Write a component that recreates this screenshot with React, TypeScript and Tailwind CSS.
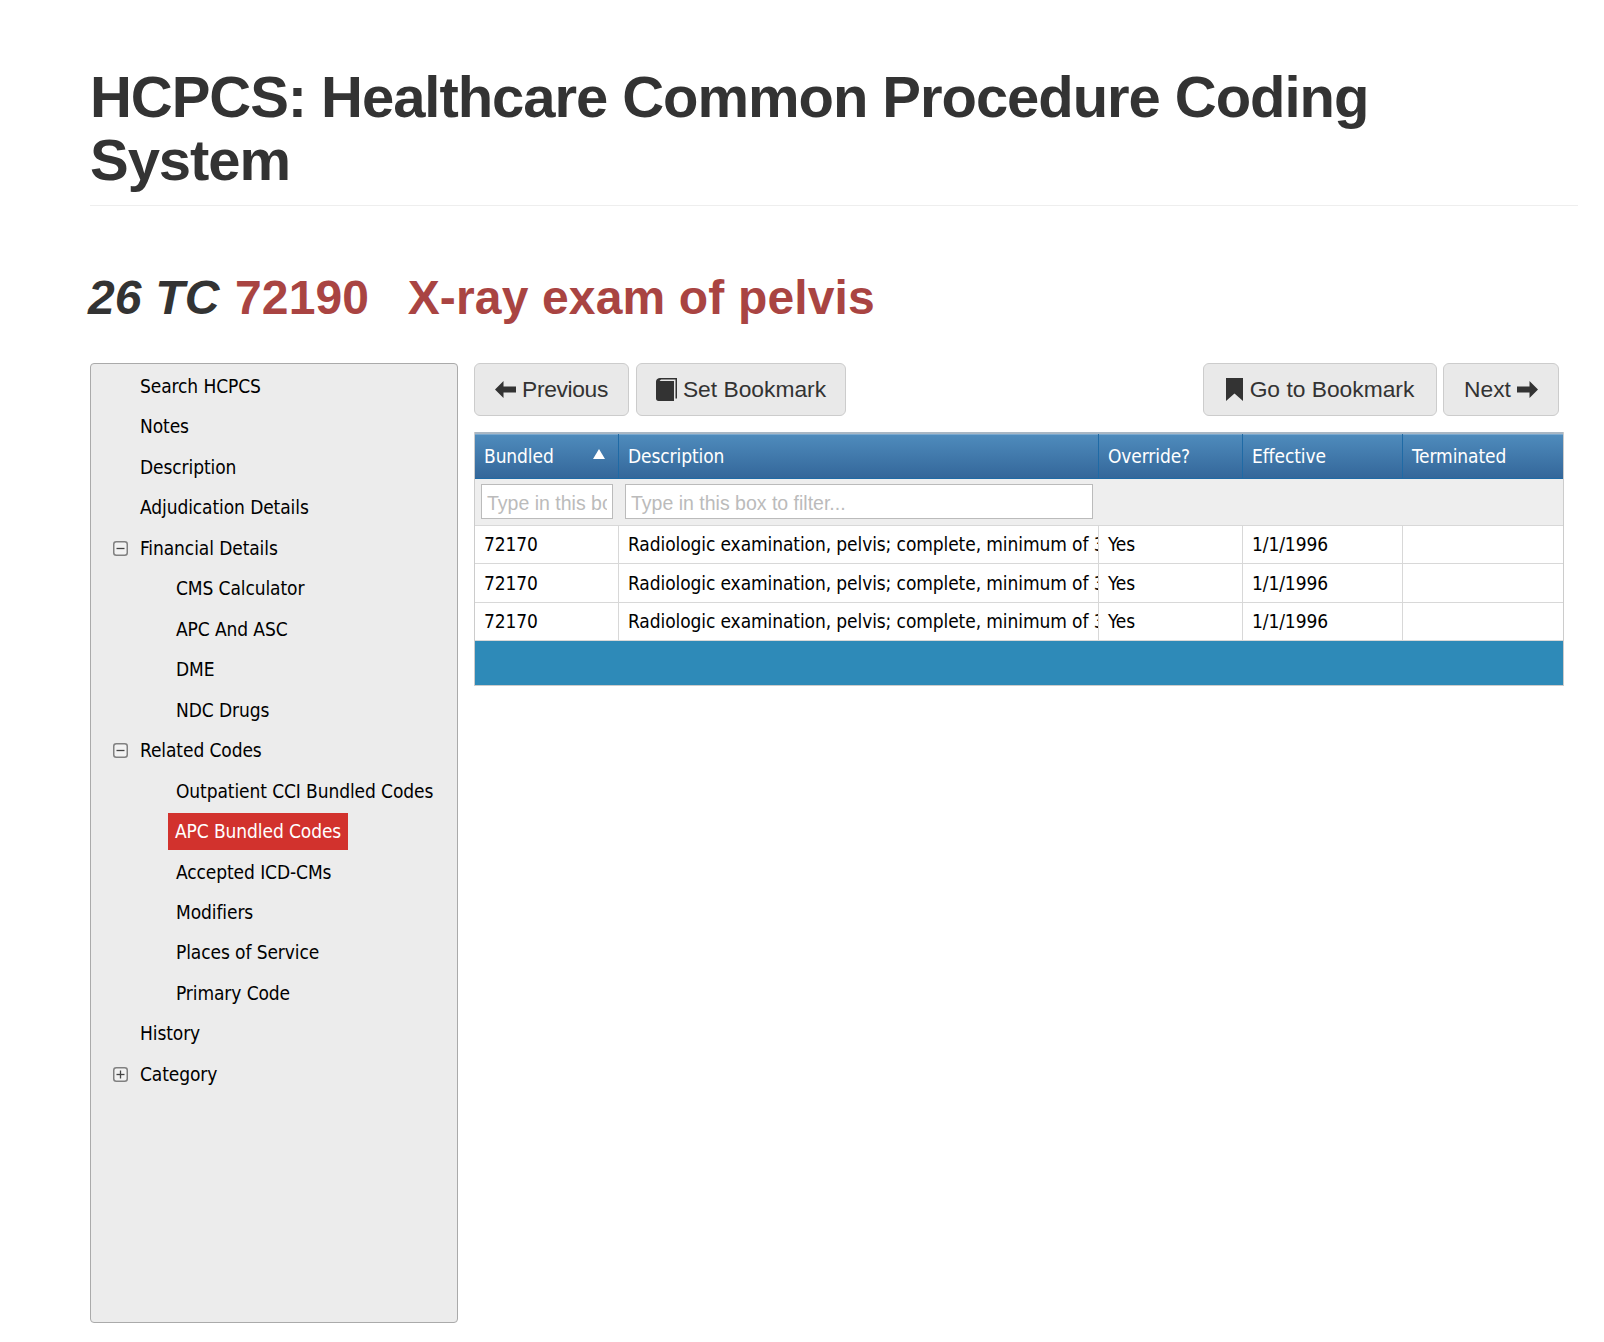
import React from 'react';

const treeFont = "font-['DejaVu_Sans','Liberation_Sans',sans-serif] [font-stretch:condensed] text-[19px] tracking-[-0.1px]";

const ArrowLeft = () => (
  <svg viewBox="0 0 21 17" className="w-[21px] h-[17px] fill-[#333]">
    <path d="M0 8.500 8.500 0V5.500H21V11.500H8.500V17Z" />
  </svg>
);

const ArrowRight = () => (
  <svg viewBox="0 0 21 17" className="w-[21px] h-[17px] fill-[#333]">
    <path d="M21 8.500 12.500 0V5.500H0V11.500H12.500V17Z" />
  </svg>
);

const BookIcon = () => (
  <svg viewBox="0 0 21 23" className="w-[21px] h-[23px] fill-[#333]">
    <path d="M4 0H21V20.500H19.500V1.500H5L3.500 3H18V23H2.500C1 23 0 22 0 20.500V3.500C0 1.500 2 0 4 0Z" />
  </svg>
);

const BookmarkIcon = () => (
  <svg viewBox="0 0 17 23" className="w-[17px] h-[23px] fill-[#333]">
    <path d="M0 0H17V23L8.500 15.500 0 23Z" />
  </svg>
);

const Expander = ({ open }: { open: boolean }) => (
  <svg viewBox="0 0 15 15" className="w-[15px] h-[15px]">
    <rect x="0.75" y="0.75" width="13.500" height="13.500" rx="2.500" fill="#f2f2f2" stroke="#808080" strokeWidth="1.500" />
    <path d="M3.500 7.500H11.500" stroke="#444" strokeWidth="1.300" />
    {!open && <path d="M7.500 3.500V11.500" stroke="#444" strokeWidth="1.300" />}
  </svg>
);

const Row = ({ label, expander }: { label: string; expander?: 'open' | 'closed' }) => (
  <div className="h-[40.47px] flex items-center pl-[22px]">
    <div className="w-[27px] shrink-0 flex items-center">
      {expander && <Expander open={expander === 'open'} />}
    </div>
    <span>{label}</span>
  </div>
);

const SubRow = ({ label, active }: { label: string; active?: boolean }) => (
  <div className="h-[40.47px] flex items-center pl-[78px]">
    {active ? (
      <span className="h-[37px] -ml-[1px] flex items-center px-[7px] bg-[#d2322d] text-white">{label}</span>
    ) : (
      <span className="px-[7px]">{label}</span>
    )}
  </div>
);

const NavButton = ({ className, children }: { className: string; children: React.ReactNode }) => (
  <button className={`h-[53px] flex items-center justify-center gap-[6px] bg-[#e9e9e9] border border-[#ccc] rounded-[6px] text-[22.800px] text-[#333] ${className}`}>
    {children}
  </button>
);

const rows = ['a', 'b', 'c'];

export default function App() {
  return (
    <div className="min-h-[1342px] bg-white pl-[90px] pr-[26px] pt-[65px] font-['Liberation_Sans',Arial,sans-serif]">
      <h1 className="text-[58px] leading-[63px] font-bold text-[#333] tracking-[-1.05px] pb-[14px] border-b border-[#eee]">
        HCPCS: Healthcare Common Procedure Coding System
      </h1>

      <h2 className="mt-[67px] mb-[40px] -ml-[2px] text-[48px] leading-[50px] font-bold text-[#a94442] tracking-[0.15px] whitespace-pre">
        <em className="text-[#333] mr-[2px]">26 TC</em> <span className="-mr-[2px]">72190</span>{'   '}X-ray exam of pelvis
      </h2>

      <div className="flex gap-[16px] items-start">
        {/* Tree */}
        <div className={`w-[368px] h-[960px] shrink-0 bg-[#ececec] border border-[#aaa] rounded-[4px] pt-[1.900px] text-black ${treeFont}`}>
          <Row label="Search HCPCS" />
          <Row label="Notes" />
          <Row label="Description" />
          <Row label="Adjudication Details" />
          <Row label="Financial Details" expander="open" />
          <SubRow label="CMS Calculator" />
          <SubRow label="APC And ASC" />
          <SubRow label="DME" />
          <SubRow label="NDC Drugs" />
          <Row label="Related Codes" expander="open" />
          <SubRow label="Outpatient CCI Bundled Codes" />
          <SubRow label="APC Bundled Codes" active />
          <SubRow label="Accepted ICD-CMs" />
          <SubRow label="Modifiers" />
          <SubRow label="Places of Service" />
          <SubRow label="Primary Code" />
          <Row label="History" />
          <Row label="Category" expander="closed" />
        </div>

        {/* Main */}
        <div className="w-[1090px] shrink-0">
          <div className="flex justify-between pr-[5px] mb-[16px]">
            <div className="flex gap-[7px]">
              <NavButton className="w-[155px]"><ArrowLeft /><span className="tracking-[-0.35px]">Previous</span></NavButton>
              <NavButton className="w-[210px]"><BookIcon />Set Bookmark</NavButton>
            </div>
            <div className="flex gap-[6px]">
              <NavButton className="w-[234px] gap-[7px]"><BookmarkIcon />Go to Bookmark</NavButton>
              <NavButton className="w-[116px]">Next<ArrowRight /></NavButton>
            </div>
          </div>

          <div className={`border-x border-b border-[#ccc] ${treeFont}`}>
            <div className="grid grid-cols-[144px_480px_144px_160px_1fr] h-[47px] border-t-2 border-[#a9b7c4] bg-gradient-to-b from-[#4f8cbd] to-[#34679a] shadow-[inset_0_1px_0_#79a8cf] text-white border-b border-b-[#1f6aa5]">
              <div className="relative flex items-center px-[9px] border-r border-[#1f6aa5]">
                Bundled
                <span className="absolute right-[13px] top-[15px] w-0 h-0 border-x-[6px] border-x-transparent border-b-[10px] border-b-white" />
              </div>
              <div className="flex items-center px-[9px] border-r border-[#1f6aa5]">Description</div>
              <div className="flex items-center px-[9px] border-r border-[#1f6aa5]">Override?</div>
              <div className="flex items-center px-[9px] border-r border-[#1f6aa5]">Effective</div>
              <div className="flex items-center px-[9px]">Terminated</div>
            </div>

            <div className="h-[46.500px] flex items-center gap-[12px] pl-[6px] bg-[#eee] border-b border-[#d8d8d8] font-['Liberation_Sans',sans-serif] [font-stretch:normal] tracking-normal">
              <input placeholder="Type in this box to filter..." className="w-[132px] h-[35px] px-[5px] pt-[3px] bg-white border border-[#bbb] text-[19.500px] placeholder:text-[#bbb]" />
              <input placeholder="Type in this box to filter..." className="w-[468px] h-[35px] px-[5px] pt-[3px] bg-white border border-[#bbb] text-[19.500px] placeholder:text-[#bbb]" />
            </div>

            {rows.map((r) => (
              <div key={r} className="grid grid-cols-[144px_480px_144px_160px_1fr] h-[38.500px] bg-white border-b border-[#d8d8d8] text-black">
                <div className="flex items-center px-[9px] border-r border-[#d8d8d8]">72170</div>
                <div className="flex items-center pl-[9px] border-r border-[#d8d8d8] overflow-hidden whitespace-nowrap">
                  Radiologic examination, pelvis; complete, minimum of 3 views
                </div>
                <div className="flex items-center px-[9px] border-r border-[#d8d8d8]">Yes</div>
                <div className="flex items-center px-[9px] border-r border-[#d8d8d8]">1/1/1996</div>
                <div />
              </div>
            ))}

            <div className="h-[44px] bg-[#2e8ab8]" />
          </div>
        </div>
      </div>
    </div>
  );
}
